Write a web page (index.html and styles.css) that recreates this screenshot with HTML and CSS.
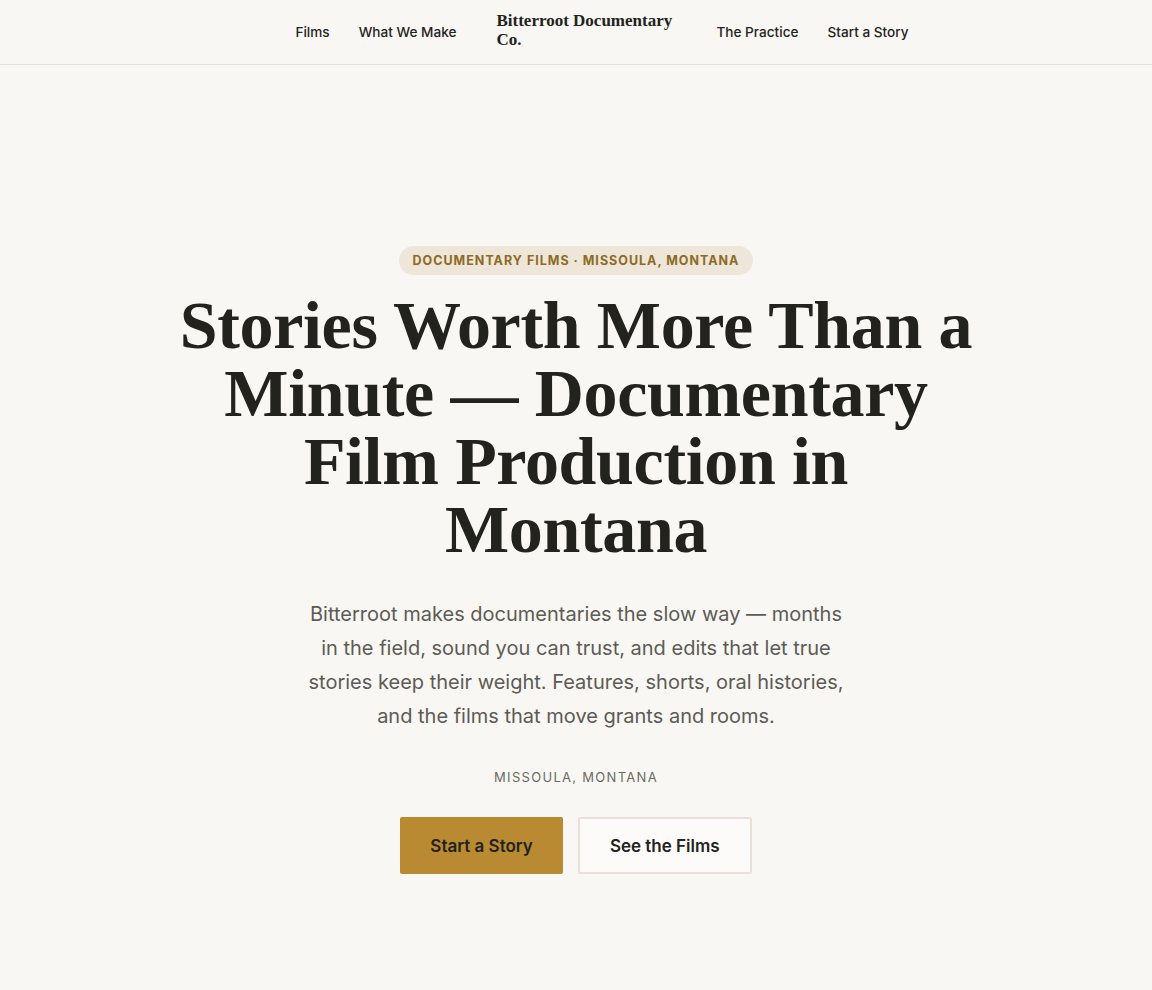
FILE: index.html
```html
<!DOCTYPE html>
<html lang="en">
<head>
<meta charset="utf-8">
<title>Bitterroot Documentary Co.</title>
<link rel="stylesheet" href="styles.css">
</head>
<body>
<header class="site-header">
  <nav class="nav">
    <div class="nav-group">
      <a class="nav-link" href="#">Films</a>
      <a class="nav-link" href="#">What We Make</a>
    </div>
    <a class="logo" href="#">Bitterroot Documentary Co.</a>
    <div class="nav-group">
      <a class="nav-link" href="#">The Practice</a>
      <a class="nav-link" href="#">Start a Story</a>
    </div>
  </nav>
</header>
<main class="hero">
  <span class="badge">Documentary Films · Missoula, Montana</span>
  <h1 class="title">Stories Worth More Than a Minute — Documentary Film Production in Montana</h1>
  <p class="lede">Bitterroot makes documentaries the slow way — months in the field, sound you can trust, and edits that let true stories keep their weight. Features, shorts, oral histories, and the films that move grants and rooms.</p>
  <p class="place">Missoula, Montana</p>
  <div class="actions">
    <a class="btn btn-primary" href="#">Start a Story</a>
    <a class="btn btn-secondary" href="#">See the Films</a>
  </div>
</main>
</body>
</html>
```
FILE: styles.css
```css
* { box-sizing: border-box; }
html, body { margin: 0; padding: 0; }
body {
  background: #f9f7f3;
  color: #23231d;
  font-family: Inter, "Noto Sans", sans-serif;
}
a { text-decoration: none; color: inherit; }

.site-header {
  border-bottom: 1px solid #e4e1da;
}
.nav {
  height: 64px;
  display: flex;
  align-items: center;
  justify-content: center;
  gap: 40px;
  padding-left: 52px;
}
.nav-group {
  display: flex;
  align-items: center;
  gap: 29px;
}
.nav-link {
  font-size: 13.6px;
  font-weight: 500;
  color: #23231d;
}
.logo {
  font-family: "Liberation Serif", serif;
  font-weight: 700;
  font-size: 17px;
  line-height: 19px;
  width: 180px;
  margin-bottom: 5px;
  color: #23231d;
}

.hero {
  display: flex;
  flex-direction: column;
  align-items: center;
  text-align: center;
  padding-top: 181px;
}
.badge {
  display: inline-block;
  background: #ede6d9;
  color: #8d6a25;
  font-size: 12.5px;
  font-weight: 700;
  letter-spacing: 0.08em;
  text-transform: uppercase;
  padding: 7px 14px;
  border-radius: 999px;
  line-height: 15px;
}
.title {
  font-family: "Liberation Serif", serif;
  font-weight: 700;
  font-size: 68px;
  line-height: 68px;
  letter-spacing: -0.005em;
  margin: 16px 0 0;
  max-width: 805px;
  color: #23231d;
}
.lede {
  margin: 34px 0 0;
  max-width: 540px;
  font-size: 20px;
  line-height: 34px;
  color: #5c5b55;
}
.place {
  margin: 36px 0 0;
  font-size: 13px;
  letter-spacing: 0.1em;
  text-transform: uppercase;
  color: #6b6a64;
}
.actions {
  display: flex;
  gap: 15px;
  margin-top: 32px;
}
.btn {
  display: inline-flex;
  align-items: center;
  justify-content: center;
  height: 57px;
  padding: 0 30px;
  font-size: 17px;
  font-weight: 600;
  border-radius: 2px;
}
.btn-primary {
  background: #b98a32;
  color: #23231d;
}
.btn-secondary {
  background: #fcfbf9;
  border: 2px solid #e9e0d9;
  color: #23231d;
}
```
